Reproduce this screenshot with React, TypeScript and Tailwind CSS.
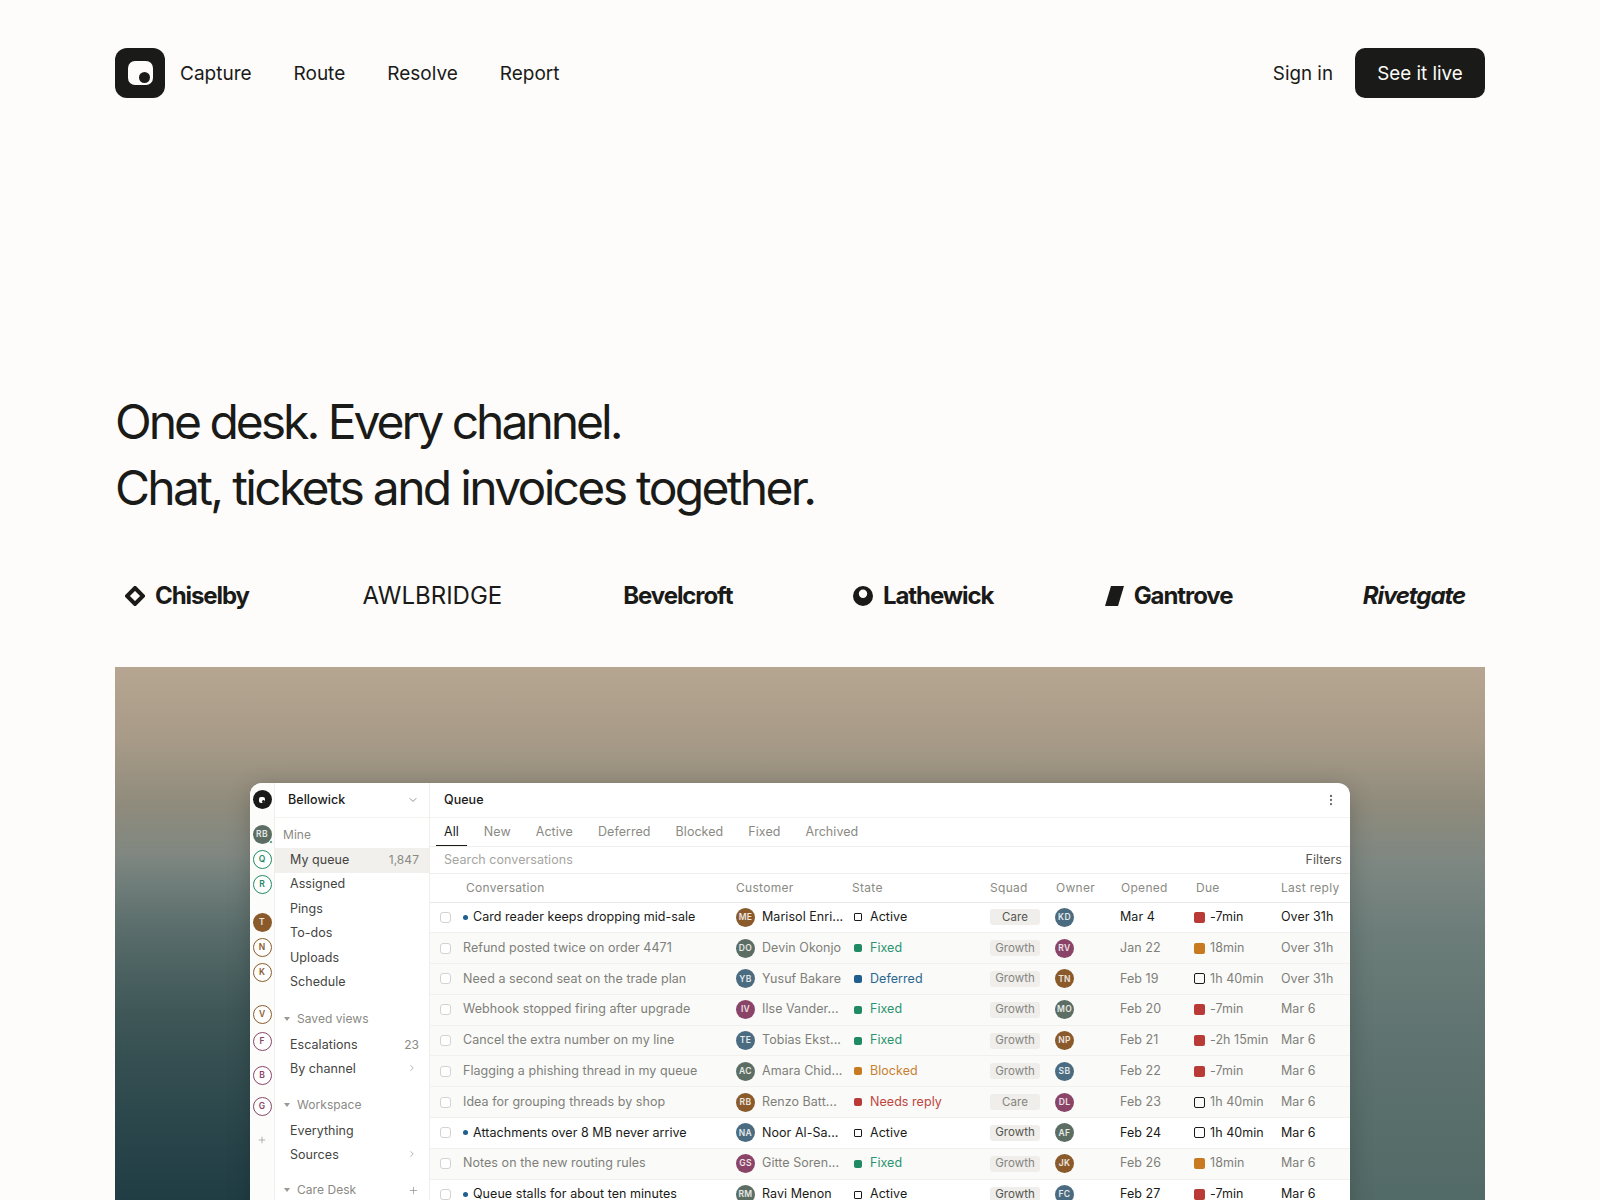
import { ChevronDown, ChevronRight, MoreVertical, Plus } from "lucide-react";

const GREEN = "#1f8a63";
const SLATE = "#4a6b80";
const PLUM = "#8a4468";
const BROWN = "#8a5a2b";
const MOSS = "#5c6e64";

type Row = {
  title: string;
  unread?: boolean;
  initials: string;
  tint: string;
  customer: string;
  state: string;
  squad: string;
  owner: string;
  ownerTint: string;
  opened: string;
  due: string;
  dueMark: "red" | "orange" | "open";
  last: string;
};

const rows: Row[] = [
  { title: "Card reader keeps dropping mid-sale", unread: true, initials: "ME", tint: BROWN, customer: "Marisol Enri...", state: "Active", squad: "Care", owner: "KD", ownerTint: SLATE, opened: "Mar 4", due: "-7min", dueMark: "red", last: "Over 31h" },
  { title: "Refund posted twice on order 4471", initials: "DO", tint: MOSS, customer: "Devin Okonjo", state: "Fixed", squad: "Growth", owner: "RV", ownerTint: PLUM, opened: "Jan 22", due: "18min", dueMark: "orange", last: "Over 31h" },
  { title: "Need a second seat on the trade plan", initials: "YB", tint: SLATE, customer: "Yusuf Bakare", state: "Deferred", squad: "Growth", owner: "TN", ownerTint: BROWN, opened: "Feb 19", due: "1h 40min", dueMark: "open", last: "Over 31h" },
  { title: "Webhook stopped firing after upgrade", initials: "IV", tint: PLUM, customer: "Ilse Vander...", state: "Fixed", squad: "Growth", owner: "MO", ownerTint: MOSS, opened: "Feb 20", due: "-7min", dueMark: "red", last: "Mar 6" },
  { title: "Cancel the extra number on my line", initials: "TE", tint: SLATE, customer: "Tobias Ekst...", state: "Fixed", squad: "Growth", owner: "NP", ownerTint: BROWN, opened: "Feb 21", due: "-2h 15min", dueMark: "red", last: "Mar 6" },
  { title: "Flagging a phishing thread in my queue", initials: "AC", tint: MOSS, customer: "Amara Chid...", state: "Blocked", squad: "Growth", owner: "SB", ownerTint: SLATE, opened: "Feb 22", due: "-7min", dueMark: "red", last: "Mar 6" },
  { title: "Idea for grouping threads by shop", initials: "RB", tint: BROWN, customer: "Renzo Batt...", state: "Needs reply", squad: "Care", owner: "DL", ownerTint: PLUM, opened: "Feb 23", due: "1h 40min", dueMark: "open", last: "Mar 6" },
  { title: "Attachments over 8 MB never arrive", unread: true, initials: "NA", tint: SLATE, customer: "Noor Al-Sa...", state: "Active", squad: "Growth", owner: "AF", ownerTint: MOSS, opened: "Feb 24", due: "1h 40min", dueMark: "open", last: "Mar 6" },
  { title: "Notes on the new routing rules", initials: "GS", tint: PLUM, customer: "Gitte Soren...", state: "Fixed", squad: "Growth", owner: "JK", ownerTint: BROWN, opened: "Feb 26", due: "18min", dueMark: "orange", last: "Mar 6" },
  { title: "Queue stalls for about ten minutes", unread: true, initials: "RM", tint: MOSS, customer: "Ravi Menon", state: "Active", squad: "Growth", owner: "FC", ownerTint: SLATE, opened: "Feb 27", due: "-7min", dueMark: "red", last: "Mar 6" },
];

const tabs = ["All", "New", "Active", "Deferred", "Blocked", "Fixed", "Archived"];

const gridCols = "grid grid-cols-[33px_273px_118px_136px_65px_65px_74px_87px_1fr] items-center";

function Avatar({ label, tint }: { label: string; tint: string }) {
  return (
    <span
      className="flex h-[19px] w-[19px] items-center justify-center rounded-full text-[8.5px] font-semibold tracking-[0.04em] text-white/85"
      style={{ backgroundColor: tint }}
    >
      {label}
    </span>
  );
}

function RingAvatar({ label, tint, className }: { label: string; tint: string; className?: string }) {
  return (
    <span
      className={"flex h-[19px] w-[19px] items-center justify-center rounded-full border-[1.5px] bg-white text-[8.5px] font-semibold " + (className ?? "")}
      style={{ borderColor: tint, color: tint }}
    >
      {label}
    </span>
  );
}

function StateMark({ state }: { state: string }) {
  if (state === "Active") {
    return <span className="h-[8px] w-[8px] rounded-[1px] border-[1.5px] border-[#1a1a18]" />;
  }
  const bg =
    state === "Fixed"
      ? "bg-[#1f8a63]"
      : state === "Deferred"
        ? "bg-[#1f5f8f]"
        : state === "Blocked"
          ? "bg-[#c87a20]"
          : "bg-[#b93a36]";
  return <span className={"h-[8px] w-[8px] rounded-[2px] " + bg} />;
}

function stateText(state: string) {
  if (state === "Active") return "text-[#1a1a18]";
  if (state === "Fixed") return "text-[#2a9470]";
  if (state === "Deferred") return "text-[#2a6790]";
  if (state === "Blocked") return "text-[#c88032]";
  return "text-[#bf4541]";
}

function DueMark({ mark }: { mark: Row["dueMark"] }) {
  if (mark === "open") {
    return <span className="h-[11px] w-[11px] rounded-[2px] border-[1.5px] border-[#1a1a18]" />;
  }
  return <span className={"h-[11px] w-[11px] rounded-[2px] " + (mark === "red" ? "bg-[#b93a36]" : "bg-[#c87a20]")} />;
}

function QueueRow({ row }: { row: Row }) {
  const muted = !row.unread;
  const text = muted ? "text-[#7f7f7a]" : "text-[#1a1a18]";
  return (
    <div className={gridCols + " h-[30.8px] shrink-0 border-b border-[#f1f0ed] " + (muted ? "bg-[#fafaf8] " : "bg-white ") + text}>
      <span className="ml-[10px] h-[11px] w-[11px] rounded-[3px] border border-[#d4d3cf] bg-white" />
      <div className="flex items-center whitespace-nowrap">
        {row.unread && <span className="mr-[5px] h-[5px] w-[5px] rounded-full bg-[#1f5f8f]" />}
        <span>{row.title}</span>
      </div>
      <div className="flex items-center gap-[7px] whitespace-nowrap">
        <Avatar label={row.initials} tint={row.tint} />
        <span>{row.customer}</span>
      </div>
      <div className={"flex items-center gap-[8px] whitespace-nowrap " + stateText(row.state)}>
        <StateMark state={row.state} />
        <span>{row.state}</span>
      </div>
      <div>
        <span className={"flex h-[16px] w-[50px] items-center justify-center rounded-[3px] bg-[#efeeeb] text-[11.5px] " + (row.unread ? "text-[#55554f]" : "text-[#85857f]")}>
          {row.squad}
        </span>
      </div>
      <Avatar label={row.owner} tint={row.ownerTint} />
      <span className="whitespace-nowrap">{row.opened}</span>
      <div className="flex items-center gap-[5px] whitespace-nowrap">
        <DueMark mark={row.dueMark} />
        <span>{row.due}</span>
      </div>
      <span className="whitespace-nowrap">{row.last}</span>
    </div>
  );
}

function NavItem({ label, count, active, arrow }: { label: string; count?: string; active?: boolean; arrow?: boolean }) {
  return (
    <div className={"flex h-[24.5px] items-center justify-between pr-[10px] pl-[15px] text-[#45453f] " + (active ? "bg-[#f1f0ed]" : "")}>
      <span>{label}</span>
      {count && <span className="text-[12px] text-[#8a8a84]">{count}</span>}
      {arrow && <ChevronRight size={10} strokeWidth={1.5} className="mr-[2px] -translate-y-[2px] text-[#8a8a84]" />}
    </div>
  );
}

function SectionLabel({ label, plus, className }: { label: string; plus?: boolean; className?: string }) {
  return (
    <div className={"flex h-[24px] items-center justify-between pr-[10px] pb-[4px] pl-[9px] text-[12px] text-[#8a8a84] " + (className ?? "")}>
      <div className="flex items-center gap-[7px]">
        <span className="h-0 w-0 border-x-[3px] border-t-[4px] border-x-transparent border-t-[#9a9a94]" />
        <span>{label}</span>
      </div>
      {plus && <Plus size={11} strokeWidth={1.5} className="text-[#8a8a84]" />}
    </div>
  );
}

function Rail() {
  return (
    <div className="flex w-[25px] shrink-0 flex-col items-center border-r border-[#efeeeb] bg-[#fcfcfb] pt-[7px]">
      <span className="flex h-[19px] w-[19px] items-center justify-center rounded-full bg-[#1a1a18]">
        <span className="relative h-[6px] w-[6px] rounded-[2px] bg-white">
          <span className="absolute right-0 bottom-0 h-[3px] w-[3px] rounded-full bg-[#1a1a18]" />
        </span>
      </span>
      <span className="relative mt-[16px]">
        <Avatar label="RB" tint={MOSS} />
        <span className="absolute right-[-1px] bottom-0 h-[4px] w-[4px] rounded-full border border-white bg-[#1f8a63]" />
      </span>
      <RingAvatar label="Q" tint={GREEN} className="mt-[6px]" />
      <RingAvatar label="R" tint={GREEN} className="mt-[6px]" />
      <span className="mt-[19px]">
        <Avatar label="T" tint={BROWN} />
      </span>
      <RingAvatar label="N" tint={BROWN} className="mt-[6px]" />
      <RingAvatar label="K" tint={BROWN} className="mt-[6px]" />
      <RingAvatar label="V" tint={BROWN} className="mt-[23px]" />
      <RingAvatar label="F" tint={PLUM} className="mt-[8px]" />
      <RingAvatar label="B" tint={PLUM} className="mt-[15px]" />
      <RingAvatar label="G" tint={PLUM} className="mt-[12px]" />
      <Plus size={10} strokeWidth={1.5} className="mt-[19px] text-[#8a8a84]" />
    </div>
  );
}

function Sidebar() {
  return (
    <div className="flex w-[155px] shrink-0 flex-col border-r border-[#efeeeb]">
      <div className="flex h-[35px] shrink-0 items-center justify-between border-b border-[#f4f3f0] pr-[10px] pl-[13px] font-[450] text-[#1a1a18]">
        <span>Bellowick</span>
        <ChevronDown size={12} strokeWidth={1.5} className="text-[#6f6f69]" />
      </div>
      <div className="flex h-[30px] shrink-0 items-end pb-[4px] pl-[8px] text-[12px] text-[#8a8a84]">Mine</div>
      <NavItem label="My queue" count="1,847" active />
      <NavItem label="Assigned" />
      <NavItem label="Pings" />
      <NavItem label="To-dos" />
      <NavItem label="Uploads" />
      <NavItem label="Schedule" />
      <SectionLabel label="Saved views" className="mt-[14px]" />
      <NavItem label="Escalations" count="23" />
      <NavItem label="By channel" arrow />
      <SectionLabel label="Workspace" className="mt-[13px]" />
      <NavItem label="Everything" />
      <NavItem label="Sources" arrow />
      <SectionLabel label="Care Desk" plus className="mt-[12px]" />
    </div>
  );
}

function Queue() {
  return (
    <div className="flex min-w-0 flex-1 flex-col">
      <div className="flex h-[35px] shrink-0 items-center justify-between border-b border-[#f4f3f0] pr-[12px] pl-[14px] font-[450] text-[#1a1a18]">
        <span>Queue</span>
        <MoreVertical size={14} strokeWidth={2} className="text-[#6f6f69]" />
      </div>
      <div className="flex h-[29px] shrink-0 items-stretch gap-[9px] border-b border-[#efeeeb] pl-[6px] text-[#8a8a84]">
        {tabs.map((tab) => (
          <span
            key={tab}
            className={"flex items-center border-b px-[8px] pt-[2px] " + (tab === "All" ? "border-[#1a1a18] text-[#1a1a18]" : "border-transparent")}
          >
            {tab}
          </span>
        ))}
      </div>
      <div className="flex h-[27px] shrink-0 items-center justify-between border-b border-[#efeeeb] pr-[8px] pl-[14px]">
        <span className="text-[#a5a5a0]">Search conversations</span>
        <span className="text-[#55554f]">Filters</span>
      </div>
      <div className={gridCols + " h-[28.500px] shrink-0 border-b border-[#e9e8e4] text-[12px] tracking-[0.025em] text-[#8a8a84]"}>
        <span />
        <span className="pl-[3px]">Conversation</span>
        <span>Customer</span>
        <span className="-ml-[2px]">State</span>
        <span>Squad</span>
        <span className="pl-[1px]">Owner</span>
        <span className="pl-[1px]">Opened</span>
        <span className="pl-[2px]">Due</span>
        <span>Last reply</span>
      </div>
      {rows.map((row) => (
        <QueueRow key={row.title} row={row} />
      ))}
    </div>
  );
}

export default function App() {
  return (
    <div className="min-h-[1200px] bg-[#fdfcfa] font-['Inter',sans-serif] text-[#1a1a18]">
      <div className="mx-auto w-[1370px]">
        <header className="flex items-center justify-between pt-[48px]">
          <div className="flex items-center gap-[15px]">
            <span className="flex h-[50px] w-[50px] items-center justify-center rounded-[12px] bg-[#1a1a18]">
              <span className="relative h-[24px] w-[25px] rounded-[7px] bg-[#fdfcfa]">
                <span className="absolute right-[3px] bottom-[2px] h-[11px] w-[11px] rounded-full bg-[#1a1a18]" />
              </span>
            </span>
            <nav className="flex items-center gap-[42px] pt-[2px] text-[19px]">
              <span>Capture</span>
              <span>Route</span>
              <span>Resolve</span>
              <span>Report</span>
            </nav>
          </div>
          <div className="flex items-center gap-[22px] text-[18.8px]">
            <span className="pt-[2px]">Sign in</span>
            <span className="flex h-[50px] w-[130px] items-center justify-center rounded-[10px] bg-[#1a1a18] pt-[2px] text-[#fdfcfa]">See it live</span>
          </div>
        </header>

        <h1 className="mt-[291px] text-[48px] leading-[66px] font-normal tracking-[-0.056em]">
          <span className="tracking-[-0.063em]">One desk. Every channel.</span>
          <br />
          Chat, tickets and invoices together.
        </h1>

        <div className="mt-[45px] flex h-[60px] items-center justify-between pr-[9px] pl-[10px] text-[24px] tracking-[-0.045em]">
          <div className="flex w-[124px] items-center justify-center gap-[10px] font-bold whitespace-nowrap">
            <svg width="20" height="20" viewBox="0 0 20 20" className="shrink-0">
              <path d="M10 2 L18 10 L10 18 L2 10 Z" fill="none" stroke="#1a1a18" strokeWidth="4" />
            </svg>
            Chiselby
          </div>
          <div className="flex w-[124px] items-center justify-center tracking-normal whitespace-nowrap">AWLBRIDGE</div>
          <div className="flex w-[124px] items-center justify-center font-bold whitespace-nowrap">Bevelcroft</div>
          <div className="flex w-[124px] items-center justify-center gap-[10px] font-bold whitespace-nowrap">
            <svg width="20" height="20" viewBox="0 0 20 20" className="shrink-0">
              <path fillRule="evenodd" d="M10 0a10 10 0 1 0 0 20a10 10 0 1 0 0-20zM10 3.500a4.200 4.200 0 1 1 0 8.400a4.200 4.200 0 1 1 0-8.400z" fill="#1a1a18" />
            </svg>
            Lathewick
          </div>
          <div className="flex w-[124px] items-center justify-center gap-[10px] font-bold whitespace-nowrap">
            <svg width="19" height="20" viewBox="0 0 19 20" className="shrink-0">
              <path d="M6 0 H19 L13 20 H0 Z" fill="#1a1a18" />
            </svg>
            Gantrove
          </div>
          <div className="flex w-[124px] items-center justify-center font-bold whitespace-nowrap italic">Rivetgate</div>
        </div>

        <section className="relative mt-[41px] h-[534px] overflow-hidden bg-[linear-gradient(180deg,#b6a691_0%,#a79a87_14%,#8f8b7c_26%,#7d8782_37%,#6c7d79_50%,#5f7370_70%,#526a67_100%)]">
          <div className="absolute inset-y-0 left-0 w-[420px] bg-[linear-gradient(180deg,transparent_35%,rgba(20,50,55,0.45)_65%,rgba(20,50,60,0.8)_100%)] [mask-image:linear-gradient(90deg,black_35%,transparent_100%)]" />
          <div className="relative mx-[135px] mt-[116px] flex h-[480px] overflow-hidden rounded-t-[12px] bg-white text-[12.5px] tracking-[0.004em] shadow-[0_4px_24px_rgba(0,0,0,0.2)]">
            <Rail />
            <Sidebar />
            <Queue />
          </div>
        </section>
      </div>
    </div>
  );
}
